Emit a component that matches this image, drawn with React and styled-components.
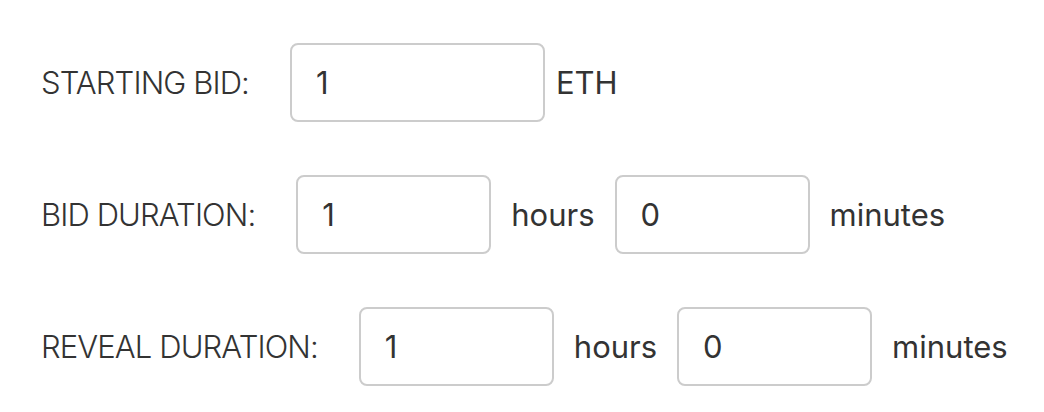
import React from "react";
import styled, { createGlobalStyle } from "styled-components";

const GlobalStyle = createGlobalStyle`
  html, body {
    margin: 0;
    padding: 0;
    background: #ffffff;
  }
  body {
    font-family: Inter, "Noto Sans", sans-serif;
    color: #333333;
  }
`;

const Form = styled.form`
  display: flex;
  flex-direction: column;
  gap: 53px;
  padding: 43px 0 0 41px;
`;

const Row = styled.div`
  display: flex;
  align-items: center;
`;

const Label = styled.label`
  font-size: 31px;
  font-weight: 300;
  letter-spacing: -0.9px;
  margin-right: 41px;
  white-space: nowrap;
`;

const Field = styled.input`
  box-sizing: border-box;
  width: ${(p) => p.$width}px;
  height: 79px;
  border: 2px solid #cccccc;
  border-radius: 8px;
  padding: 0 24px;
  font-family: inherit;
  font-size: 31px;
  font-weight: 400;
  color: #333333;
  background: #ffffff;
  outline: none;
`;

const Unit = styled.span`
  font-size: 31px;
  font-weight: 400;
  margin: 0 ${(p) => p.$right ?? 20}px 0 ${(p) => p.$left ?? 20}px;
  white-space: nowrap;
`;

function DurationRow({ label, hours, minutes }) {
  return (
    <Row>
      <Label>{label}</Label>
      <Field $width={195} defaultValue={hours} />
      <Unit>hours</Unit>
      <Field $width={195} defaultValue={minutes} />
      <Unit>minutes</Unit>
    </Row>
  );
}

export default function App() {
  return (
    <>
      <GlobalStyle />
      <Form onSubmit={(e) => e.preventDefault()}>
        <Row>
          <Label>STARTING BID:</Label>
          <Field $width={255} defaultValue="1" />
          <Unit $left={11}>ETH</Unit>
        </Row>
        <DurationRow label="BID DURATION:" hours="1" minutes="0" />
        <DurationRow label="REVEAL DURATION:" hours="1" minutes="0" />
      </Form>
    </>
  );
}
